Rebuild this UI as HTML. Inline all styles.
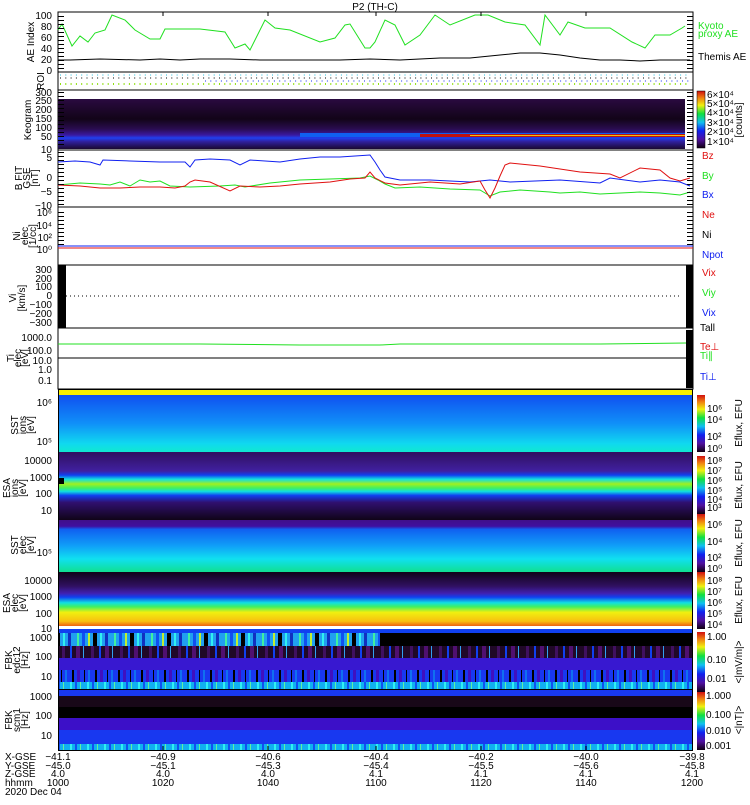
<!DOCTYPE html>
<html><head><meta charset="utf-8"><style>
html,body{margin:0;padding:0;background:#fff}
svg text{font-family:"Liberation Sans",sans-serif;font-size:10px;fill:#000}
</style></head><body>
<svg width="750" height="800" viewBox="0 0 750 800" xmlns="http://www.w3.org/2000/svg">
<defs>
<linearGradient id="keo" x1="0" y1="0" x2="0" y2="1">
<stop offset="0" stop-color="#2a0a40"/><stop offset="0.4" stop-color="#120418"/><stop offset="0.6" stop-color="#2a0c50"/><stop offset="0.72" stop-color="#3a18a0"/><stop offset="0.78" stop-color="#2040f0"/><stop offset="0.85" stop-color="#3020a0"/><stop offset="1" stop-color="#1a0830"/>
</linearGradient>
<linearGradient id="sst1" x1="0" y1="0" x2="0" y2="1">
<stop offset="0" stop-color="#1050f0"/><stop offset="0.5" stop-color="#1090f8"/><stop offset="0.85" stop-color="#10d8f0"/><stop offset="1" stop-color="#10e8d0"/>
</linearGradient>
<linearGradient id="esa1" x1="0" y1="0" x2="0" y2="1">
<stop offset="0" stop-color="#301060"/><stop offset="0.28" stop-color="#4020a0"/><stop offset="0.34" stop-color="#1040f0"/><stop offset="0.4" stop-color="#10e0e0"/><stop offset="0.47" stop-color="#a0f020"/><stop offset="0.53" stop-color="#40f060"/><stop offset="0.58" stop-color="#10e0e0"/><stop offset="0.64" stop-color="#1040f0"/><stop offset="0.74" stop-color="#301070"/><stop offset="1" stop-color="#100418"/>
</linearGradient>
<linearGradient id="sst2" x1="0" y1="0" x2="0" y2="1">
<stop offset="0" stop-color="#40108a"/><stop offset="0.12" stop-color="#4010a0"/><stop offset="0.18" stop-color="#1060f0"/><stop offset="0.5" stop-color="#10a0f8"/><stop offset="0.75" stop-color="#10e0f0"/><stop offset="1" stop-color="#10e090"/>
</linearGradient>
<linearGradient id="esa2" x1="0" y1="0" x2="0" y2="1">
<stop offset="0" stop-color="#100418"/><stop offset="0.25" stop-color="#301060"/><stop offset="0.38" stop-color="#4020b0"/><stop offset="0.45" stop-color="#1040f0"/><stop offset="0.55" stop-color="#10e0e0"/><stop offset="0.62" stop-color="#40f060"/><stop offset="0.72" stop-color="#f0f010"/><stop offset="0.88" stop-color="#f8c010"/><stop offset="0.95" stop-color="#f07010"/><stop offset="1" stop-color="#e04010"/>
</linearGradient>
<linearGradient id="cb" x1="0" y1="1" x2="0" y2="0">
<stop offset="0" stop-color="#100010"/><stop offset="0.15" stop-color="#5010a0"/><stop offset="0.3" stop-color="#1020f0"/><stop offset="0.45" stop-color="#10c0f0"/><stop offset="0.6" stop-color="#10e040"/><stop offset="0.75" stop-color="#f0f010"/><stop offset="0.88" stop-color="#f08010"/><stop offset="1" stop-color="#d01010"/>
</linearGradient>
<pattern id="str1" width="37" height="10" patternUnits="userSpaceOnUse">
<rect width="37" height="10" fill="#20a0f0"/><rect x="3" width="2" height="10" fill="#40f0a0"/><rect x="8" width="3" height="10" fill="#1050f0"/><rect x="14" width="2" height="10" fill="#c0f030"/><rect x="19" width="4" height="10" fill="#000"/><rect x="26" width="2" height="10" fill="#30f0f0"/><rect x="31" width="3" height="10" fill="#1030c0"/>
</pattern>
<pattern id="str2" width="29" height="10" patternUnits="userSpaceOnUse">
<rect width="29" height="10" fill="#200828"/><rect x="4" width="3" height="10" fill="#401060"/><rect x="12" width="2" height="10" fill="#1040f0"/><rect x="18" width="4" height="10" fill="#501070"/><rect x="25" width="1" height="10" fill="#30a0f0"/>
</pattern>
<pattern id="str3" width="23" height="10" patternUnits="userSpaceOnUse">
<rect width="23" height="10" fill="#1838f0"/><rect x="3" width="2" height="10" fill="#000"/><rect x="8" width="3" height="10" fill="#4010c0"/><rect x="15" width="1" height="10" fill="#000"/><rect x="19" width="2" height="10" fill="#1070f0"/>
</pattern>
<pattern id="str4" width="17" height="10" patternUnits="userSpaceOnUse">
<rect width="17" height="10" fill="#10b0f0"/><rect x="2" width="2" height="10" fill="#30f0f0"/><rect x="7" width="2" height="10" fill="#1050f0"/><rect x="12" width="1" height="10" fill="#60f0a0"/>
</pattern>
<pattern id="tk" width="8" height="4" patternUnits="userSpaceOnUse"><rect width="8" height="1" fill="#000"/></pattern>
</defs>

<text x="375" y="10" text-anchor="middle">P2 (TH-C)</text>

<!-- AE panel -->
<rect x="58" y="12" width="635" height="60" fill="#fff" stroke="#000"/>
<polyline fill="none" stroke="#20e020" points="58,30 62,24 72,46 80,36 88,42 95,33 105,30 112,15 125,20 135,30 150,39 160,39 165,29 200,29 225,32 235,48 245,44 250,50 265,20 275,28 290,30 320,42 335,38 345,25 350,24 365,48 370,48 375,42 385,20 395,25 405,45 420,35 435,15 450,25 475,15 488,15 505,22 525,25 540,45 545,15 560,35 568,22 585,28 610,28 632,42 645,48 655,35 670,35 682,28 685,26"/>
<polyline fill="none" stroke="#000" points="58,60 70,60 100,59 140,60 160,59 180,60 200,59 230,59 260,60 300,60 340,60 370,59 400,60 440,58 470,58 500,55 520,53 540,53 560,55 580,58 600,60 620,60 640,61 660,60 680,60 690,60"/>
<g font-size="9">
<text x="52" y="19" text-anchor="end" font-size="9">100</text><text x="52" y="30" text-anchor="end" font-size="9">80</text><text x="52" y="41" text-anchor="end" font-size="9">60</text><text x="52" y="52" text-anchor="end" font-size="9">40</text><text x="52" y="63" text-anchor="end" font-size="9">20</text><text x="52" y="74" text-anchor="end" font-size="9">0</text>
</g>
<text transform="translate(34,42) rotate(-90)" text-anchor="middle" font-size="9">AE Index</text>
<text x="698" y="29" style="fill:#20e020">Kyoto</text><text x="698" y="37" style="fill:#20e020">proxy AE</text>
<text x="698" y="60">Themis AE</text>

<!-- ROI -->
<rect x="58" y="72" width="635" height="18" fill="#fff" stroke="#000"/>
<line x1="60" y1="75" x2="690" y2="75" stroke="#20c0e0" stroke-dasharray="1,4.3"/>
<line x1="60" y1="78" x2="690" y2="78" stroke="#000" stroke-dasharray="1,4.3"/>
<line x1="205" y1="81" x2="690" y2="81" stroke="#1030f0" stroke-dasharray="1,4.3"/>
<line x1="60" y1="84" x2="690" y2="84" stroke="#90e010" stroke-dasharray="1,4.3" stroke-width="2"/>
<text transform="translate(44,81) rotate(-90)" text-anchor="middle" font-size="8">ROI</text>

<!-- Keogram -->
<rect x="58" y="90" width="635" height="60" fill="#fff" stroke="#000"/>
<rect x="58" y="99" width="627" height="50" fill="url(#keo)"/>
<rect x="300" y="133" width="385" height="4" fill="#1060f0"/>
<rect x="420" y="134" width="265" height="3" fill="#c01010"/>
<rect x="470" y="135" width="215" height="1" fill="#f0c010"/>
<text x="52" y="96" text-anchor="end" font-size="9">300</text><text x="52" y="104" text-anchor="end" font-size="9">250</text><text x="52" y="113" text-anchor="end" font-size="9">200</text><text x="52" y="122" text-anchor="end" font-size="9">150</text><text x="52" y="131" text-anchor="end" font-size="9">100</text><text x="52" y="140" text-anchor="end" font-size="9">50</text><text x="52" y="153" text-anchor="end" font-size="9">10</text>
<text transform="translate(31,120) rotate(-90)" text-anchor="middle" font-size="9">Keogram</text>
<rect x="697" y="91" width="8" height="57" fill="url(#cb)" stroke="#000" stroke-width="0.5"/>
<text x="707" y="98" font-size="8">6×10⁴</text><text x="707" y="107" font-size="8">5×10⁴</text><text x="707" y="116" font-size="8">4×10⁴</text><text x="707" y="126" font-size="8">3×10⁴</text><text x="707" y="135" font-size="8">2×10⁴</text><text x="707" y="145" font-size="8">1×10⁴</text>
<text transform="translate(742,120) rotate(-90)" text-anchor="middle" font-size="8">[counts]</text>

<!-- B -->
<rect x="58" y="150" width="635" height="57" fill="#fff" stroke="#000"/>
<polyline fill="none" stroke="#1020f0" points="58,162 75,161 90,162 100,165 103,160 130,161 160,162 185,162 190,167 195,160 210,159 230,160 240,165 250,160 280,162 300,159 320,157 340,157 370,155 375,162 380,170 385,177 400,180 430,180 470,182 490,180 510,182 560,180 600,183 610,178 640,182 660,180 680,182 690,186"/>
<polyline fill="none" stroke="#20e020" points="58,185 80,183 100,184 110,185 120,182 130,186 140,180 150,182 160,181 170,186 190,187 220,186 235,185 245,187 270,183 300,180 330,179 360,178 370,176 378,180 385,184 395,188 420,187 450,189 480,190 490,196 500,192 520,190 550,192 560,193 580,192 600,194 640,192 660,193 680,195 690,192"/>
<polyline fill="none" stroke="#e01010" points="58,185 80,186 100,188 120,188 140,187 160,187 175,188 185,186 190,182 195,180 210,182 230,191 240,186 260,187 280,186 300,184 330,182 350,179 365,178 370,172 375,178 385,183 400,185 430,182 460,184 480,181 485,190 490,198 495,188 500,176 505,165 510,163 540,166 580,172 610,174 620,178 640,168 660,170 670,178 680,181 690,178"/>
<text x="52" y="161" text-anchor="end" font-size="9">5</text><text x="52" y="181" text-anchor="end" font-size="9">0</text><text x="52" y="195" text-anchor="end" font-size="9">−5</text><text x="52" y="209" text-anchor="end" font-size="9">−10</text>
<text transform="translate(22,178) rotate(-90)" text-anchor="middle" font-size="8">B FIT</text>
<text transform="translate(30,178) rotate(-90)" text-anchor="middle" font-size="7">GSE</text>
<text transform="translate(38,178) rotate(-90)" text-anchor="middle" font-size="7">[nT]</text>
<text x="702" y="159" style="fill:#e01010">Bz</text><text x="702" y="179" style="fill:#20e020">By</text><text x="702" y="198" style="fill:#1020f0">Bx</text>

<!-- N -->
<rect x="58" y="207" width="635" height="58" fill="#fff" stroke="#000"/>
<line x1="58" y1="246" x2="693" y2="246" stroke="#1020f0"/><line x1="58" y1="248" x2="693" y2="248" stroke="#e01010"/>
<text x="52" y="216" text-anchor="end" font-size="9">10⁶</text><text x="52" y="229" text-anchor="end" font-size="9">10⁴</text><text x="52" y="241" text-anchor="end" font-size="9">10²</text><text x="52" y="253" text-anchor="end" font-size="9">10⁰</text>
<text transform="translate(20,236) rotate(-90)" text-anchor="middle" font-size="8">Ni</text>
<text transform="translate(28,236) rotate(-90)" text-anchor="middle" font-size="7">elec</text>
<text transform="translate(36,236) rotate(-90)" text-anchor="middle" font-size="7">[1/cc]</text>
<text x="702" y="218" style="fill:#e01010">Ne</text><text x="702" y="238">Ni</text><text x="702" y="258" style="fill:#1020f0">Npot</text>

<!-- V -->
<rect x="58" y="265" width="635" height="63" fill="#fff" stroke="#000"/>
<rect x="58" y="265" width="8" height="63" fill="#000"/><rect x="686" y="265" width="7" height="63" fill="#000"/>
<line x1="66" y1="296" x2="680" y2="296" stroke="#000" stroke-dasharray="1,3"/>
<text x="52" y="273" text-anchor="end" font-size="9">300</text><text x="52" y="282" text-anchor="end" font-size="9">200</text><text x="52" y="290" text-anchor="end" font-size="9">100</text><text x="52" y="299" text-anchor="end" font-size="9">0</text><text x="52" y="308" text-anchor="end" font-size="9">−100</text><text x="52" y="317" text-anchor="end" font-size="9">−200</text><text x="52" y="326" text-anchor="end" font-size="9">−300</text>
<text transform="translate(16,298) rotate(-90)" text-anchor="middle" font-size="8">Vi</text>
<text transform="translate(25,298) rotate(-90)" text-anchor="middle" font-size="8">[km/s]</text>
<text x="702" y="276" style="fill:#e01010">Vix</text><text x="702" y="296" style="fill:#20e020">Viy</text><text x="702" y="316" style="fill:#1020f0">Vix</text>

<!-- T -->
<rect x="58" y="328" width="635" height="61" fill="#fff" stroke="#000"/>
<line x1="58" y1="358" x2="693" y2="358" stroke="#000"/>
<polyline fill="none" stroke="#20e020" points="58,344 200,344 300,345 380,345 400,344 500,344 600,344 686,343"/>
<rect x="686" y="330" width="7" height="58" fill="#000"/>
<text x="52" y="341" text-anchor="end" font-size="9">1000.0</text><text x="52" y="354" text-anchor="end" font-size="9">100.0</text><text x="52" y="364" text-anchor="end" font-size="9">10.0</text><text x="52" y="373" text-anchor="end" font-size="9">1.0</text><text x="52" y="384" text-anchor="end" font-size="9">0.1</text>
<text transform="translate(14,358) rotate(-90)" text-anchor="middle" font-size="7">Ti</text>
<text transform="translate(21,358) rotate(-90)" text-anchor="middle" font-size="7">elec</text>
<text transform="translate(28,358) rotate(-90)" text-anchor="middle" font-size="7">[eV]</text>
<text x="700" y="331">Tall</text><text x="700" y="350" style="fill:#e01010">Te⊥</text><text x="700" y="359" style="fill:#20e020">Ti∥</text><text x="700" y="380" style="fill:#1020f0">Ti⊥</text>

<!-- yellow band -->
<rect x="58" y="389" width="635" height="6" fill="#f8f000"/>

<!-- SST ions -->
<rect x="58" y="395" width="635" height="57" fill="url(#sst1)"/>
<text x="52" y="406" text-anchor="end" font-size="9">10⁶</text><text x="52" y="445" text-anchor="end" font-size="9">10⁵</text>
<text transform="translate(18,425) rotate(-90)" text-anchor="middle" font-size="8">SST</text>
<text transform="translate(26,425) rotate(-90)" text-anchor="middle" font-size="7">ions</text>
<text transform="translate(34,425) rotate(-90)" text-anchor="middle" font-size="7">[eV]</text>

<!-- ESA ions -->
<rect x="58" y="452" width="635" height="68" fill="url(#esa1)"/>
<rect x="58" y="478" width="6" height="6" fill="#000"/>
<text x="52" y="464" text-anchor="end" font-size="9">10000</text><text x="52" y="481" text-anchor="end" font-size="9">1000</text><text x="52" y="497" text-anchor="end" font-size="9">100</text><text x="52" y="514" text-anchor="end" font-size="9">10</text>
<text transform="translate(10,488) rotate(-90)" text-anchor="middle" font-size="8">ESA</text>
<text transform="translate(18,488) rotate(-90)" text-anchor="middle" font-size="7">ions</text>
<text transform="translate(26,488) rotate(-90)" text-anchor="middle" font-size="7">[eV]</text>

<!-- SST elec -->
<rect x="58" y="520" width="635" height="52" fill="url(#sst2)"/>
<text x="52" y="556" text-anchor="end" font-size="9">10⁵</text>
<text transform="translate(18,545) rotate(-90)" text-anchor="middle" font-size="8">SST</text>
<text transform="translate(26,545) rotate(-90)" text-anchor="middle" font-size="7">elec</text>
<text transform="translate(34,545) rotate(-90)" text-anchor="middle" font-size="7">[eV]</text>

<!-- ESA elec -->
<rect x="58" y="572" width="635" height="56" fill="url(#esa2)"/>
<text x="52" y="584" text-anchor="end" font-size="9">10000</text><text x="52" y="600" text-anchor="end" font-size="9">1000</text><text x="52" y="617" text-anchor="end" font-size="9">100</text><text x="52" y="632" text-anchor="end" font-size="9">10</text>
<text transform="translate(10,603) rotate(-90)" text-anchor="middle" font-size="8">ESA</text>
<text transform="translate(18,603) rotate(-90)" text-anchor="middle" font-size="7">elec</text>
<text transform="translate(26,603) rotate(-90)" text-anchor="middle" font-size="7">[eV]</text>
<rect x="58" y="626" width="635" height="2" fill="#fff"/>

<!-- FBK 1 -->
<rect x="58" y="629" width="635" height="4" fill="#1040f0"/>
<rect x="58" y="633" width="322" height="13" fill="url(#str1)"/>
<rect x="380" y="633" width="313" height="13" fill="#000"/>
<rect x="58" y="646" width="635" height="12" fill="url(#str2)"/>
<rect x="58" y="658" width="635" height="12" fill="#3818d0"/>
<rect x="58" y="670" width="635" height="12" fill="url(#str3)"/>
<rect x="58" y="682" width="635" height="7" fill="url(#str4)"/>
<line x1="58" y1="689.5" x2="693" y2="689.5" stroke="#000"/>
<text x="52" y="641" text-anchor="end" font-size="9">1000</text><text x="52" y="660" text-anchor="end" font-size="9">100</text><text x="52" y="680" text-anchor="end" font-size="9">10</text>
<text transform="translate(12,660) rotate(-90)" text-anchor="middle" font-size="8">FBK</text>
<text transform="translate(20,660) rotate(-90)" text-anchor="middle" font-size="7">edc12</text>
<text transform="translate(28,660) rotate(-90)" text-anchor="middle" font-size="7">[Hz]</text>

<!-- FBK 2 -->
<rect x="58" y="690" width="635" height="6" fill="#1838f0"/>
<rect x="58" y="696" width="635" height="11" fill="#180818"/>
<rect x="58" y="707" width="635" height="11" fill="#000"/>
<rect x="58" y="718" width="635" height="12" fill="#3c10c8"/>
<rect x="58" y="730" width="635" height="14" fill="#1838f0"/>
<rect x="58" y="744" width="635" height="6" fill="url(#str4)"/>
<text x="52" y="700" text-anchor="end" font-size="9">1000</text><text x="52" y="719" text-anchor="end" font-size="9">100</text><text x="52" y="739" text-anchor="end" font-size="9">10</text>
<text transform="translate(12,720) rotate(-90)" text-anchor="middle" font-size="8">FBK</text>
<text transform="translate(20,720) rotate(-90)" text-anchor="middle" font-size="7">scm1</text>
<text transform="translate(28,720) rotate(-90)" text-anchor="middle" font-size="7">[Hz]</text>
<rect x="58.5" y="389.5" width="634" height="361" fill="none" stroke="#000"/>

<!-- left minor ticks -->
<rect x="58" y="14" width="6" height="58" fill="url(#tk)"/>
<rect x="58" y="92" width="6" height="56" fill="url(#tk)"/>
<rect x="58" y="152" width="6" height="54" fill="url(#tk)"/>
<rect x="58" y="209" width="6" height="36" fill="url(#tk)"/>
<rect x="687" y="14" width="6" height="58" fill="url(#tk)"/>
<rect x="687" y="92" width="6" height="56" fill="url(#tk)"/>
<rect x="687" y="152" width="6" height="54" fill="url(#tk)"/>
<rect x="687" y="209" width="6" height="36" fill="url(#tk)"/>

<!-- colorbars -->
<rect x="697" y="395" width="8" height="57" fill="url(#cb)"/>
<rect x="697" y="456" width="8" height="58" fill="url(#cb)"/>
<rect x="697" y="514" width="8" height="58" fill="url(#cb)"/>
<rect x="697" y="572" width="8" height="57" fill="url(#cb)"/>
<rect x="697" y="632" width="8" height="60" fill="url(#cb)"/>
<rect x="697" y="692" width="8" height="58" fill="url(#cb)"/>
<text x="707" y="412" font-size="8">10⁶</text><text x="707" y="423" font-size="8">10⁴</text><text x="707" y="440" font-size="8">10²</text><text x="707" y="452" font-size="8">10⁰</text>
<text x="707" y="464" font-size="8">10⁸</text><text x="707" y="474" font-size="8">10⁷</text><text x="707" y="484" font-size="8">10⁶</text><text x="707" y="494" font-size="8">10⁵</text><text x="707" y="503" font-size="8">10⁴</text><text x="707" y="511" font-size="8">10³</text>
<text x="707" y="528" font-size="8">10⁶</text><text x="707" y="545" font-size="8">10⁴</text><text x="707" y="561" font-size="8">10²</text><text x="707" y="572" font-size="8">10⁰</text>
<text x="707" y="584" font-size="8">10⁸</text><text x="707" y="595" font-size="8">10⁷</text><text x="707" y="606" font-size="8">10⁶</text><text x="707" y="617" font-size="8">10⁵</text><text x="707" y="628" font-size="8">10⁴</text>
<text x="707" y="640" font-size="8">1.00</text><text x="707" y="663" font-size="8">0.10</text><text x="707" y="682" font-size="8">0.01</text>
<text x="706" y="699" font-size="8">1.000</text><text x="706" y="718" font-size="8">0.100</text><text x="706" y="734" font-size="8">0.010</text><text x="706" y="749" font-size="8">0.001</text>
<text transform="translate(742,423) rotate(-90)" text-anchor="middle" font-size="8">Eflux, EFU</text>
<text transform="translate(742,485) rotate(-90)" text-anchor="middle" font-size="8">Eflux, EFU</text>
<text transform="translate(742,543) rotate(-90)" text-anchor="middle" font-size="8">Eflux, EFU</text>
<text transform="translate(742,600) rotate(-90)" text-anchor="middle" font-size="8">Eflux, EFU</text>
<text transform="translate(742,662) rotate(-90)" text-anchor="middle" font-size="8">&lt;|mV/m|&gt;</text>
<text transform="translate(742,720) rotate(-90)" text-anchor="middle" font-size="8">&lt;|nT|&gt;</text>

<!-- time ticks -->
<g stroke="#000">
<line x1="163" y1="12" x2="163" y2="16"/><line x1="268" y1="12" x2="268" y2="16"/><line x1="376" y1="12" x2="376" y2="16"/><line x1="481" y1="12" x2="481" y2="16"/><line x1="586" y1="12" x2="586" y2="16"/>
<line x1="163" y1="746" x2="163" y2="750"/><line x1="268" y1="746" x2="268" y2="750"/><line x1="376" y1="746" x2="376" y2="750"/><line x1="481" y1="746" x2="481" y2="750"/><line x1="586" y1="746" x2="586" y2="750"/>
</g>

<!-- bottom labels -->
<text x="5" y="760">X-GSE</text><text x="5" y="769">Y-GSE</text><text x="5" y="777">Z-GSE</text><text x="5" y="786">hhmm</text><text x="5" y="795">2020 Dec 04</text>
<g text-anchor="middle">
<text x="58" y="760">−41.1</text><text x="58" y="769">−45.0</text><text x="58" y="777">4.0</text><text x="58" y="786">1000</text>
<text x="163" y="760">−40.9</text><text x="163" y="769">−45.1</text><text x="163" y="777">4.0</text><text x="163" y="786">1020</text>
<text x="268" y="760">−40.6</text><text x="268" y="769">−45.3</text><text x="268" y="777">4.0</text><text x="268" y="786">1040</text>
<text x="376" y="760">−40.4</text><text x="376" y="769">−45.4</text><text x="376" y="777">4.1</text><text x="376" y="786">1100</text>
<text x="481" y="760">−40.2</text><text x="481" y="769">−45.5</text><text x="481" y="777">4.1</text><text x="481" y="786">1120</text>
<text x="586" y="760">−40.0</text><text x="586" y="769">−45.6</text><text x="586" y="777">4.1</text><text x="586" y="786">1140</text>
<text x="692" y="760">−39.8</text><text x="692" y="769">−45.8</text><text x="692" y="777">4.1</text><text x="692" y="786">1200</text>
</g>
</svg>
</body></html>
